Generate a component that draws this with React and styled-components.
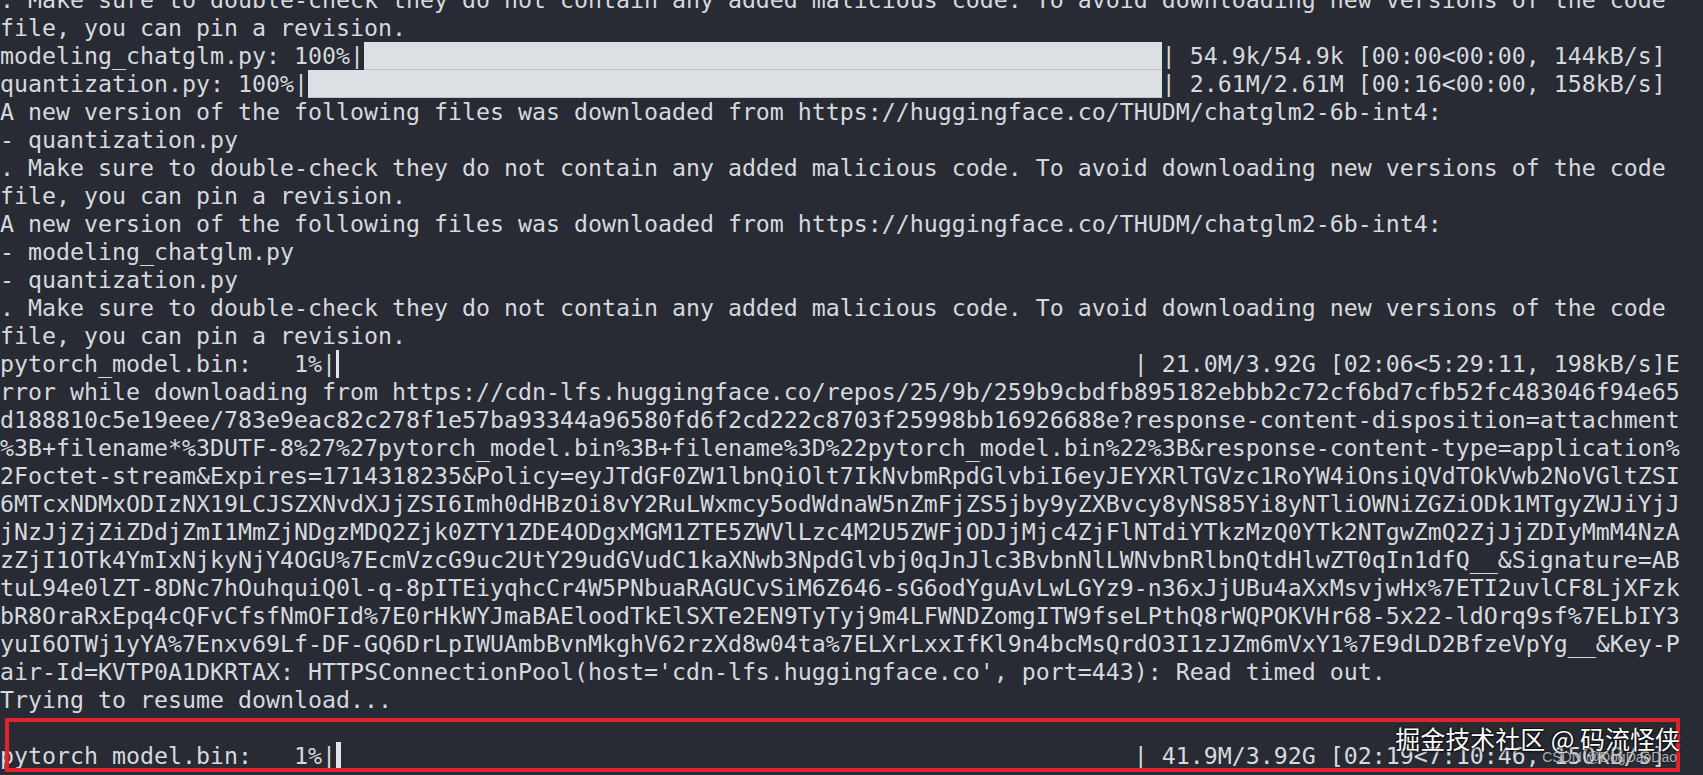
import React from "react";
import styled, { createGlobalStyle } from "styled-components";

const GlobalStyle = createGlobalStyle`
  html, body { margin: 0; padding: 0; background: #282b33; }
  body { overflow: hidden; }
`;

const Screen = styled.div`
  position: relative;
  width: 1703px;
  height: 775px;
  overflow: hidden;
  background: #282b33;
`;

const Terminal = styled.div`
  margin-top: -14.5px;
  font-family: "DejaVu Sans Mono", monospace;
  font-size: 23.25px;
  line-height: 28px;
  color: #d6d9de;
  white-space: pre;
`;

const Line = styled.div`
  height: 28px;
`;

const Bar = styled.span`
  display: inline-block;
  vertical-align: top;
  width: ${(p) => p.$cells}ch;
  height: 28px;
  background: #dcdfe4;
  box-shadow: inset 0 -1px 0 #c0c3c9;
`;

const Partial = styled.span`
  display: inline-block;
  vertical-align: top;
  width: 1ch;
  height: 28px;
  background: linear-gradient(
    to right,
    #e2e4e8 ${(p) => p.$px}px,
    transparent ${(p) => p.$px}px
  );
`;

const Highlight = styled.div`
  position: absolute;
  left: 5px;
  top: 718px;
  width: 1675px;
  height: 54px;
  box-sizing: border-box;
  border: 4px solid #e3232b;
`;

const Watermark = styled.div`
  position: absolute;
  right: 23px;
  top: 726px;
  display: flex;
  flex-direction: column;
  align-items: flex-end;
`;

const WatermarkTitle = styled.div`
  font-family: "Noto Sans CJK SC", "Noto Sans", sans-serif;
  font-size: 25px;
  line-height: 25px;
  color: #ffffff;
  white-space: pre;
  text-shadow: 0 0 1px #000, 1px 1px 2px rgba(0, 0, 0, 0.85),
    -1px -1px 1px rgba(0, 0, 0, 0.5);
`;

const WatermarkSub = styled.div`
  font-family: "Liberation Sans", sans-serif;
  font-size: 14px;
  line-height: 14px;
  margin-top: -1px;
  margin-right: 3px;
  color: rgba(225, 225, 225, 0.75);
  text-shadow: 0 0 2px rgba(0, 0, 0, 0.6);
`;

const WARN =
  ". Make sure to double-check they do not contain any added malicious code. To avoid downloading new versions of the code";
const PIN = "file, you can pin a revision.";
const NEWVER =
  "A new version of the following files was downloaded from https://huggingface.co/THUDM/chatglm2-6b-int4:";

const lines = [
  WARN,
  PIN,
  { left: "modeling_chatglm.py: 100%|", bar: 57, right: "| 54.9k/54.9k [00:00<00:00, 144kB/s]" },
  { left: "quantization.py: 100%|", bar: 61, right: "| 2.61M/2.61M [00:16<00:00, 158kB/s]" },
  NEWVER,
  "- quantization.py",
  WARN,
  PIN,
  NEWVER,
  "- modeling_chatglm.py",
  "- quantization.py",
  WARN,
  PIN,
  {
    left: "pytorch_model.bin:   1%|",
    partial: 3,
    pad: 56,
    right: "| 21.0M/3.92G [02:06<5:29:11, 198kB/s]E",
  },
  "rror while downloading from https://cdn-lfs.huggingface.co/repos/25/9b/259b9cbdfb895182ebbb2c72cf6bd7cfb52fc483046f94e65",
  "d188810c5e19eee/783e9eac82c278f1e57ba93344a96580fd6f2cd222c8703f25998bb16926688e?response-content-disposition=attachment",
  "%3B+filename*%3DUTF-8%27%27pytorch_model.bin%3B+filename%3D%22pytorch_model.bin%22%3B&response-content-type=application%",
  "2Foctet-stream&Expires=1714318235&Policy=eyJTdGF0ZW1lbnQiOlt7IkNvbmRpdGlvbiI6eyJEYXRlTGVzc1RoYW4iOnsiQVdTOkVwb2NoVGltZSI",
  "6MTcxNDMxODIzNX19LCJSZXNvdXJjZSI6Imh0dHBzOi8vY2RuLWxmcy5odWdnaW5nZmFjZS5jby9yZXBvcy8yNS85Yi8yNTliOWNiZGZiODk1MTgyZWJiYjJ",
  "jNzJjZjZiZDdjZmI1MmZjNDgzMDQ2Zjk0ZTY1ZDE4ODgxMGM1ZTE5ZWVlLzc4M2U5ZWFjODJjMjc4ZjFlNTdiYTkzMzQ0YTk2NTgwZmQ2ZjJjZDIyMmM4NzA",
  "zZjI1OTk4YmIxNjkyNjY4OGU%7EcmVzcG9uc2UtY29udGVudC1kaXNwb3NpdGlvbj0qJnJlc3BvbnNlLWNvbnRlbnQtdHlwZT0qIn1dfQ__&Signature=AB",
  "tuL94e0lZT-8DNc7hOuhquiQ0l-q-8pITEiyqhcCr4W5PNbuaRAGUCvSiM6Z646-sG6odYguAvLwLGYz9-n36xJjUBu4aXxMsvjwHx%7ETI2uvlCF8LjXFzk",
  "bR8OraRxEpq4cQFvCfsfNmOFId%7E0rHkWYJmaBAEloodTkElSXTe2EN9TyTyj9m4LFWNDZomgITW9fseLPthQ8rWQPOKVHr68-5x22-ldOrq9sf%7ELbIY3",
  "yuI6OTWj1yYA%7Enxv69Lf-DF-GQ6DrLpIWUAmbBvnMkghV62rzXd8w04ta%7ELXrLxxIfKl9n4bcMsQrdO3I1zJZm6mVxY1%7E9dLD2BfzeVpYg__&Key-P",
  "air-Id=KVTP0A1DKRTAX: HTTPSConnectionPool(host='cdn-lfs.huggingface.co', port=443): Read timed out.",
  "Trying to resume download...",
  "",
  {
    left: "pytorch_model.bin:   1%|",
    partial: 5,
    pad: 56,
    right: "| 41.9M/3.92G [02:19<7:10:46, 150kB/s]",
  },
];

function TermLine({ item }) {
  if (typeof item === "string") return <Line>{item}</Line>;
  return (
    <Line>
      {item.left}
      {item.bar ? <Bar $cells={item.bar} /> : null}
      {item.partial ? <Partial $px={item.partial} /> : null}
      {item.pad ? " ".repeat(item.pad) : null}
      {item.right}
    </Line>
  );
}

export default function App() {
  return (
    <>
      <GlobalStyle />
      <Screen>
        <Terminal>
          {lines.map((item, i) => (
            <TermLine key={i} item={item} />
          ))}
        </Terminal>
        <Highlight />
        <Watermark>
          <WatermarkTitle>掘金技术社区 @ 码流怪侠</WatermarkTitle>
          <WatermarkSub>CSDN @DogDaoDao</WatermarkSub>
        </Watermark>
      </Screen>
    </>
  );
}
